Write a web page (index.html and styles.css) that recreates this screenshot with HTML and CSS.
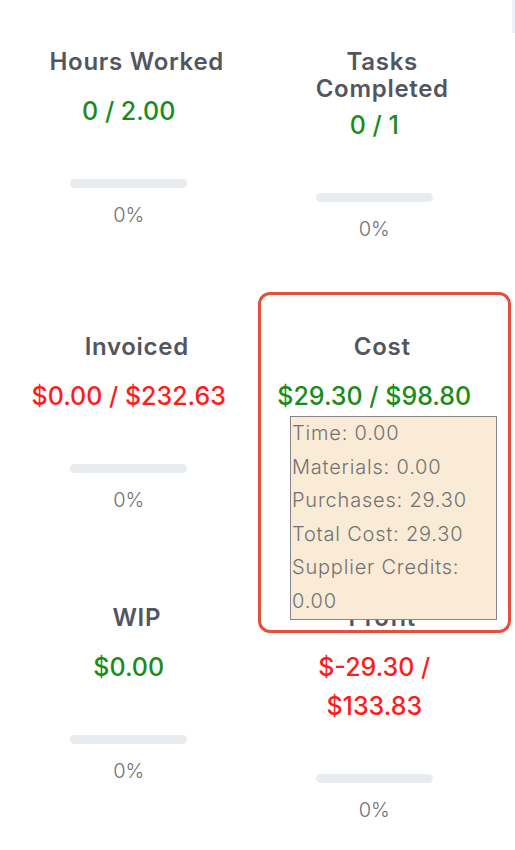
FILE: index.html
```html
<!DOCTYPE html>
<html lang="en">
<head>
<meta charset="utf-8">
<title>Job Summary</title>
<link rel="stylesheet" href="styles.css">
</head>
<body>
<div class="edge"></div>
<main class="stats">
  <section class="card">
    <h3 class="title">Hours Worked</h3>
    <div class="value good">0 / 2.00</div>
    <div class="bar"><div class="fill" style="width:0%"></div></div>
    <div class="pct">0%</div>
  </section>
  <section class="card">
    <h3 class="title">Tasks Completed</h3>
    <div class="value good">0 / 1</div>
    <div class="bar"><div class="fill" style="width:0%"></div></div>
    <div class="pct">0%</div>
  </section>
  <section class="card">
    <h3 class="title">Invoiced</h3>
    <div class="value bad">$0.00 / $232.63</div>
    <div class="bar"><div class="fill" style="width:0%"></div></div>
    <div class="pct">0%</div>
  </section>
  <section class="card card-highlight">
    <div class="highlight"></div>
    <h3 class="title">Cost</h3>
    <div class="value good">$29.30 / $98.80
      <div class="tooltip">
        <div>Time: 0.00</div>
        <div>Materials: 0.00</div>
        <div>Purchases: 29.30</div>
        <div>Total Cost: 29.30</div>
        <div>Supplier Credits: 0.00</div>
      </div>
    </div>
    <div class="bar"><div class="fill" style="width:0%"></div></div>
    <div class="pct">0%</div>
  </section>
  <section class="card">
    <h3 class="title">WIP</h3>
    <div class="value good">$0.00</div>
    <div class="bar"><div class="fill" style="width:0%"></div></div>
    <div class="pct">0%</div>
  </section>
  <section class="card">
    <h3 class="title">Profit</h3>
    <div class="value bad">$-29.30 / $133.83</div>
    <div class="bar"><div class="fill" style="width:0%"></div></div>
    <div class="pct">0%</div>
  </section>
</main>
</body>
</html>
```
FILE: styles.css
```css
html, body {
  margin: 0;
  padding: 0;
  background: #ffffff;
}

body {
  font-family: Inter, "Noto Sans", sans-serif;
  color: #555961;
}

.edge {
  position: fixed;
  top: 0;
  right: 0;
  width: 3px;
  height: 33px;
  background: #eff0f9;
}

.stats {
  display: grid;
  grid-template-columns: 1fr 1fr;
  row-gap: 89px;
  padding: 48px 18px 40px 6px;
}

.card {
  position: relative;
  display: flex;
  flex-direction: column;
  align-items: center;
  text-align: center;
}

.title {
  margin: 0 0 4px 0;
  padding: 0 20px 0 36px;
  min-height: 40px;
  font-size: 24px;
  line-height: 27px;
  font-weight: 600;
  letter-spacing: 0.7px;
  color: #53565e;
  align-self: stretch;
}

.value {
  position: relative;
  align-self: stretch;
  padding: 0 24px;
  font-size: 25px;
  line-height: 39px;
  font-weight: 500;
}

.good { color: #1a8c1a; }
.bad { color: #ff1c1c; }

.bar {
  margin-top: 48px;
  width: 117px;
  height: 9px;
  border-radius: 5px;
  background: #e9ecef;
  overflow: hidden;
}

.fill {
  height: 100%;
  background: #1a8c1a;
}

.pct {
  margin-top: 12px;
  font-size: 20px;
  line-height: 30px;
  font-weight: 300;
  color: #6f7277;
}

.tooltip {
  position: absolute;
  top: 100%;
  right: 0;
  z-index: 5;
  box-sizing: border-box;
  width: 207px;
  padding: 0 0 0 1px;
  background: #faebd7;
  border: 1.5px solid #86868a;
  text-align: left;
  font-size: 20px;
  line-height: 33.6px;
  font-weight: 300;
  letter-spacing: 0.8px;
  color: #727272;
}

.highlight {
  position: absolute;
  z-index: 6;
  top: -41px;
  left: 6px;
  right: -14px;
  height: 341px;
  box-sizing: border-box;
  border: 3.5px solid #e4503e;
  border-radius: 12px;
  pointer-events: none;
}
```
